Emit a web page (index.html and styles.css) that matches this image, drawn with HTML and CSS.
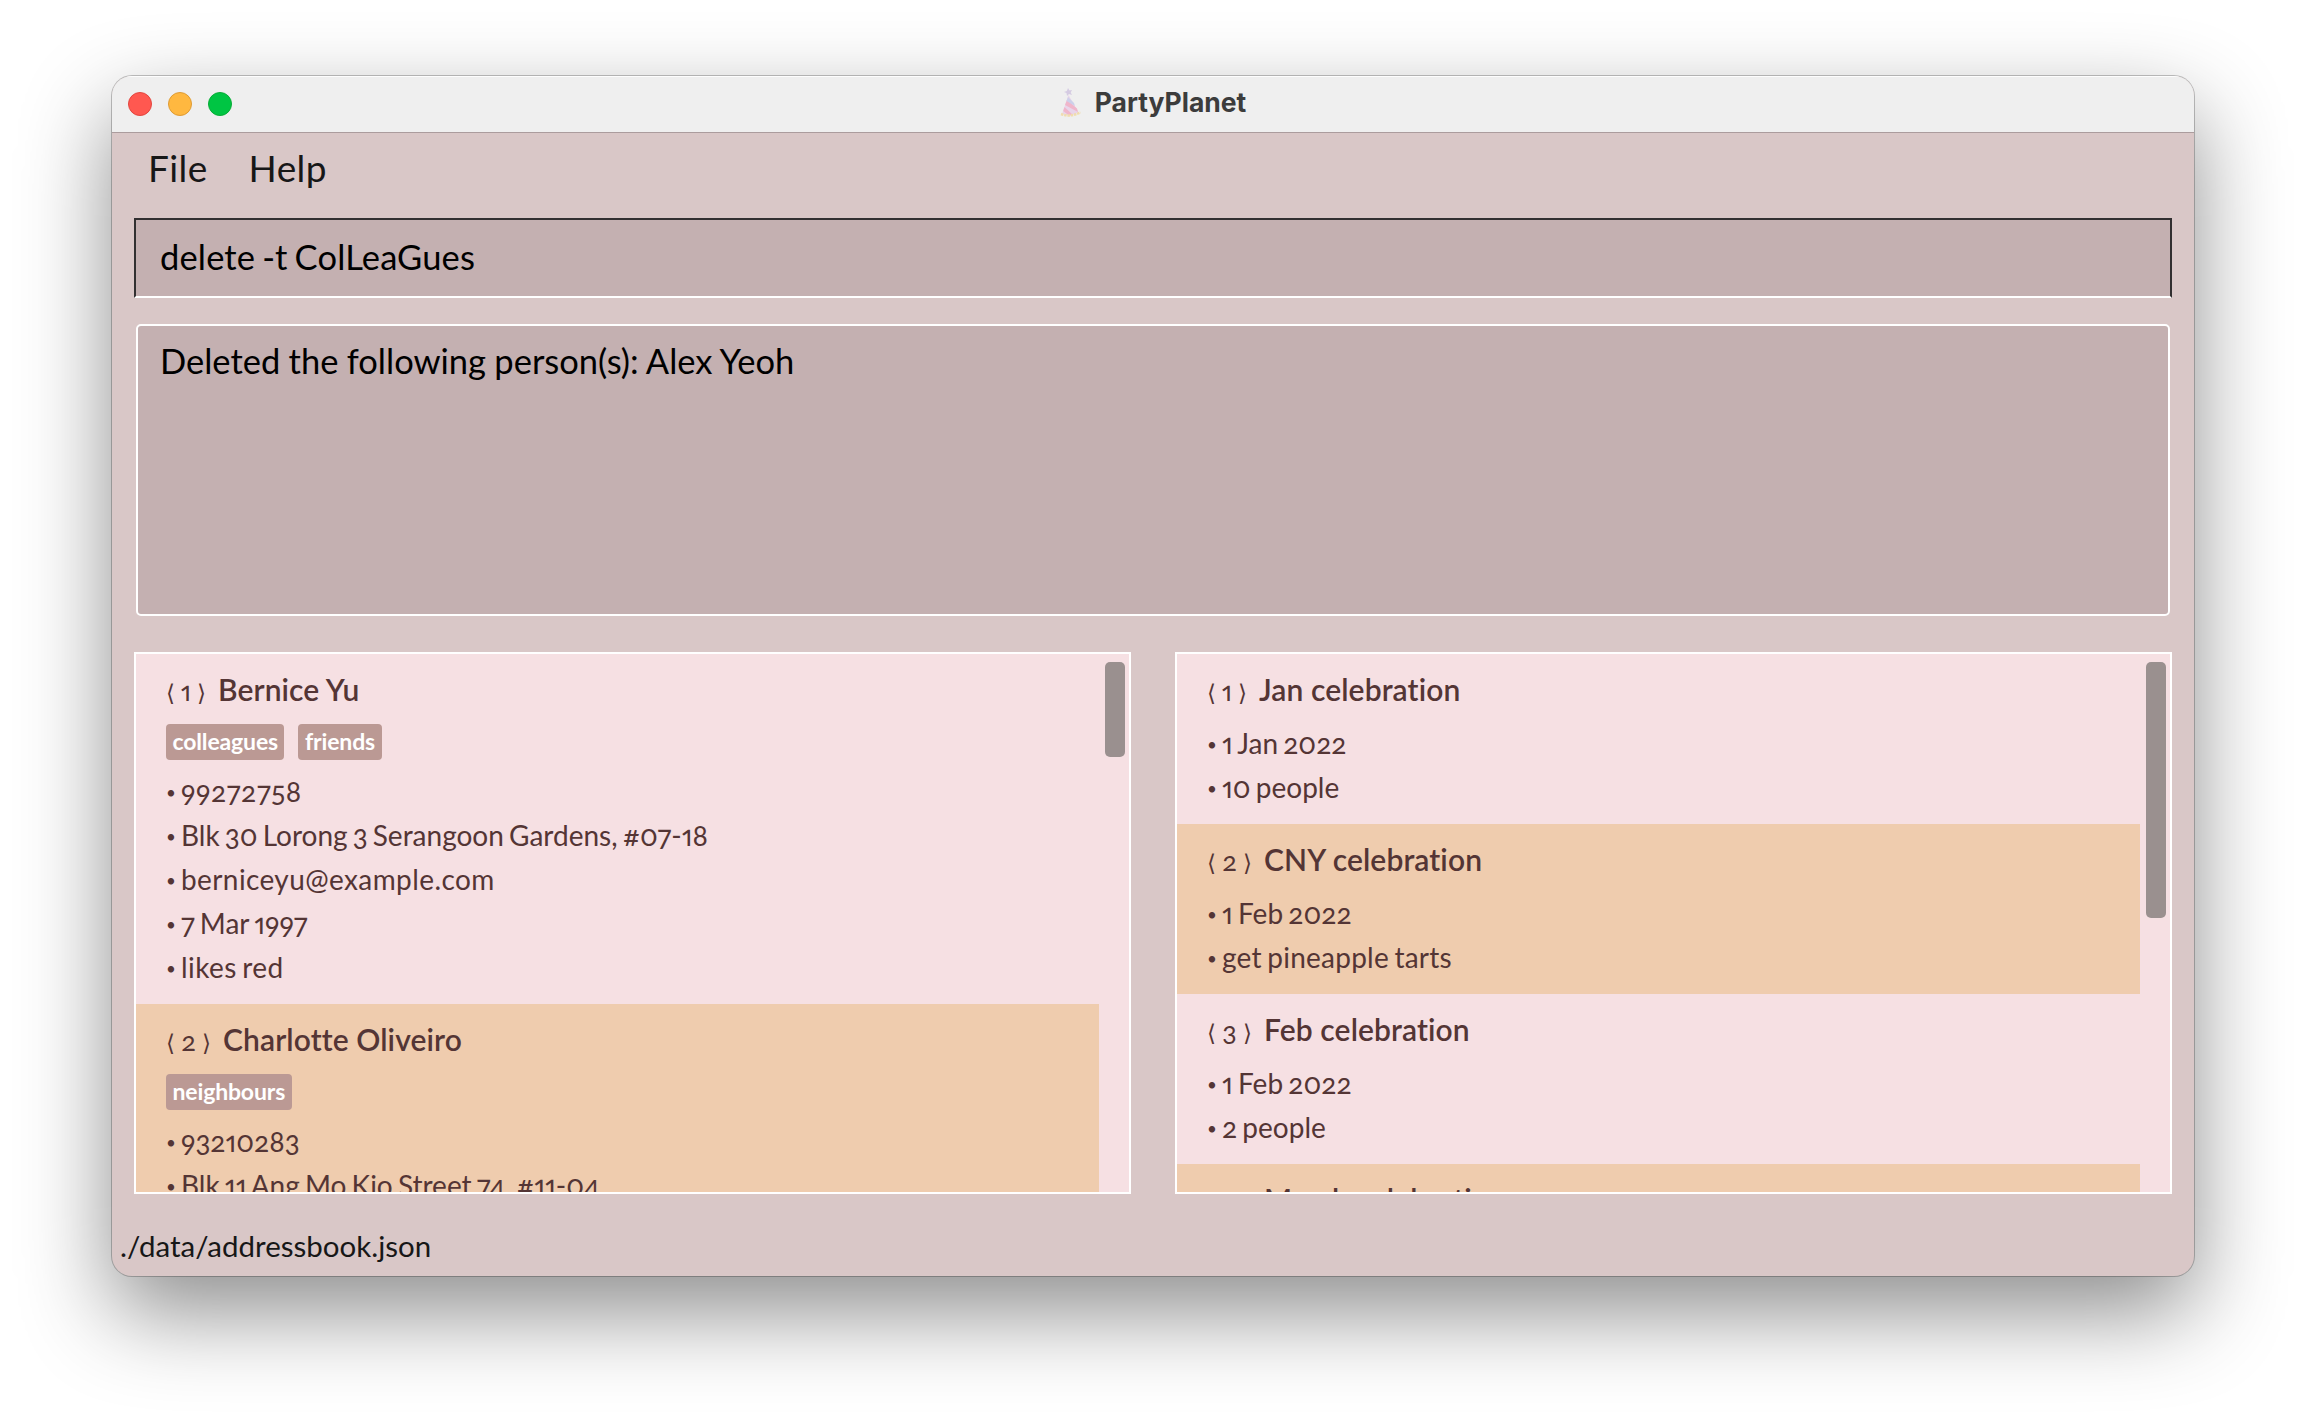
FILE: index.html
```
<!DOCTYPE html>
<html lang="en">
<head>
<meta charset="utf-8">
<title>PartyPlanet</title>
<link rel="stylesheet" href="styles.css">
</head>
<body>
<div class="window">
  <header class="titlebar">
    <div class="lights"><i class="light close"></i><i class="light minimise"></i><i class="light zoom"></i></div>
    <div class="title">
      <svg class="hat" viewBox="0 0 22 30" width="22" height="30">
        <path d="M8.500 7 2 26Q10 29.500 18.500 24.500Z" fill="#e9d5ea"/>
        <path d="M7 12 17 20.500 18 24 5 17ZM4.500 19 13 27 9 27.500 3.200 23Z" fill="#f0b6cb"/>
        <path d="M8 9 14 15 15 18 6.500 13Z" fill="#cdd0ea"/>
        <path d="M1 26Q10 29.500 20.500 24.500" fill="none" stroke="#f0dcae" stroke-width="2.500" stroke-dasharray="2.500 .8"/>
        <path d="M8 0 9.500 2.500 12 2 10.700 4.500 12 7 9 6 7 8 6.500 5 4 4 6.800 3Z" fill="#d5cbe2"/>
      </svg>
      <span>PartyPlanet</span>
    </div>
  </header>
  <nav class="menu"><span>File</span><span>Help</span></nav>
  <div class="command">delete -t ColLeaGues</div>
  <div class="result">Deleted the following person(s): Alex Yeoh</div>
  <main class="panels">
    <section class="panel">
      <div class="list">
        <article class="card">
          <h2><span class="br">⟨</span><span class="num">1</span><span class="br">⟩</span><span class="name">Bernice Yu</span></h2>
          <div class="tags"><span class="tag">colleagues</span><span class="tag">friends</span></div>
          <ul><li class="phone">99272758</li><li>Blk 30 Lorong 3 Serangoon Gardens, #07-18</li><li class="mail">berniceyu@example.com</li><li>7 Mar 1997</li><li class="mail">likes red</li></ul>
        </article>
        <article class="card alt">
          <h2><span class="br">⟨</span><span class="num wide">2</span><span class="br">⟩</span><span class="name">Charlotte Oliveiro</span></h2>
          <div class="tags"><span class="tag">neighbours</span></div>
          <ul><li>93210283</li><li>Blk 11 Ang Mo Kio Street 74, #11-04</li></ul>
        </article>
      </div>
      <div class="track"><div class="thumb people"></div></div>
    </section>
    <section class="panel">
      <div class="list">
        <article class="card">
          <h2><span class="br">⟨</span><span class="num">1</span><span class="br">⟩</span><span class="name">Jan celebration</span></h2>
          <ul><li>1 Jan 2022</li><li>10 people</li></ul>
        </article>
        <article class="card alt">
          <h2><span class="br">⟨</span><span class="num wide">2</span><span class="br">⟩</span><span class="name">CNY celebration</span></h2>
          <ul><li>1 Feb 2022</li><li class="note">get pineapple tarts</li></ul>
        </article>
        <article class="card">
          <h2><span class="br">⟨</span><span class="num wide">3</span><span class="br">⟩</span><span class="name">Feb celebration</span></h2>
          <ul><li>1 Feb 2022</li><li>2 people</li></ul>
        </article>
        <article class="card alt">
          <h2><span class="br">⟨</span><span class="num wide">4</span><span class="br">⟩</span><span class="name">March celebration</span></h2>
        </article>
      </div>
      <div class="track"><div class="thumb events"></div></div>
    </section>
  </main>
  <footer class="status">./data/addressbook.json</footer>
</div>
</body>
</html>
```

FILE: styles.css
```
* { box-sizing: border-box; }
body {
  margin: 0;
  padding: 76px 112px 0;
  height: 1424px;
  overflow: hidden;
  background: #fff;
  font-family: Lato, "Open Sans", sans-serif;
  font-feature-settings: "onum", "pnum";
  font-variant-ligatures: none;
}
.window {
  width: 2082px;
  height: 1200px;
  display: flex;
  flex-direction: column;
  border-radius: 20px;
  overflow: hidden;
  background: #d9c7c7;
  box-shadow: 0 0 0 1px rgba(0, 0, 0, .23), 0 36px 90px rgba(0, 0, 0, .45);
}
.titlebar {
  height: 57px;
  flex: none;
  display: grid;
  grid-template-columns: 1fr auto 1fr;
  align-items: center;
  padding-bottom: 2px;
  background: #efefef;
  border-top: 1px solid #fdfdfd;
  border-bottom: 1px solid #ab9c9d;
}
.lights { display: flex; gap: 16px; padding-left: 16px; }
.light { width: 24px; height: 24px; border-radius: 50%; border: 1px solid; }
.close { background: #ff5850; border-color: #e2463f; }
.minimise { background: #ffb840; border-color: #de9b34; }
.zoom { background: #00c543; border-color: #08ac37; }
.title {
  display: flex;
  align-items: center;
  gap: 13px;
  font: 700 26.5px/30px Inter, sans-serif;
  color: #3c3c3c;
}
.hat { margin-top: -2px; }
.title span { margin-top: -3px; }
.menu {
  height: 85px;
  display: flex;
  gap: 41px;
  padding: 13px 0 0 36px;
  font-size: 37px;
  line-height: 44px;
  letter-spacing: .4px;
  color: #171717;
}
.command, .result {
  color: #000;
  background: #c4b0b1;
  font-size: 34.5px;
  line-height: 40px;
}
.command {
  margin: 0 22px;
  height: 80px;
  padding: 17px 24px 0;
  border: 2px solid #323031;
  border-bottom-color: #fff;
  letter-spacing: .15px;
  word-spacing: -2px;
}
.result {
  margin: 26px 24px 0;
  height: 292px;
  padding: 15px 22px 0;
  border: 2px solid #fff;
  border-radius: 5px;
  word-spacing: -.5px;
}
.panels { display: grid; grid-template-columns: 1fr 1fr; gap: 44px; margin: 36px 22px 0; }
.panel {
  height: 542px;
  display: grid;
  grid-template-columns: 1fr 30px;
  overflow: hidden;
  border: 2px solid #fff;
  background: #f6e0e3;
  color: #543535;
}
.list { height: 538px; overflow: hidden; }
.card { padding: 17px 30px 15px; }
.alt { background: #efccae; }
h2 {
  margin: 0 0 -1px;
  height: 36px;
  display: flex;
  align-items: baseline;
  font-size: 30px;
  line-height: 36px;
  font-weight: 600;
}
.br {
  width: 9px;
  font: 400 23px/20px "DejaVu Sans", sans-serif;
}
.num { width: 22px; text-align: center; font-size: 27px; font-weight: 400; }
.num.wide { width: 27px; }
.name { margin-left: 12px; white-space: nowrap; letter-spacing: .1px; }
.tags { display: flex; gap: 14px; padding-top: 18px; margin-bottom: -6px; }
.tag {
  height: 36px;
  padding: 0 6.5px;
  border-radius: 4px;
  background: #bb9994;
  color: #fff;
  font-size: 23px;
  font-weight: 700;
  line-height: 35px;
  letter-spacing: -.15px;
}
ul { list-style: none; margin: 15px 0 0; padding: 0; }
li {
  display: flex;
  height: 44px;
  font-size: 28px;
  line-height: 45px;
  white-space: nowrap;
  word-spacing: -2px;
}
li::before {
  content: "•";
  width: 15px;
  font-size: 17px;
  line-height: 48px;
  letter-spacing: 0;
}
.phone { letter-spacing: .6px; }
.mail { letter-spacing: .4px; }
.note { letter-spacing: .25px; }
.track { padding: 8px 6px; }
.thumb { width: 20px; border-radius: 5px; background: #9a908f; }
.people { height: 95px; }
.events { height: 256px; }
.status { padding: 32px 8px 0; font-size: 29.500px; line-height: 40px; color: #171717; }
```
